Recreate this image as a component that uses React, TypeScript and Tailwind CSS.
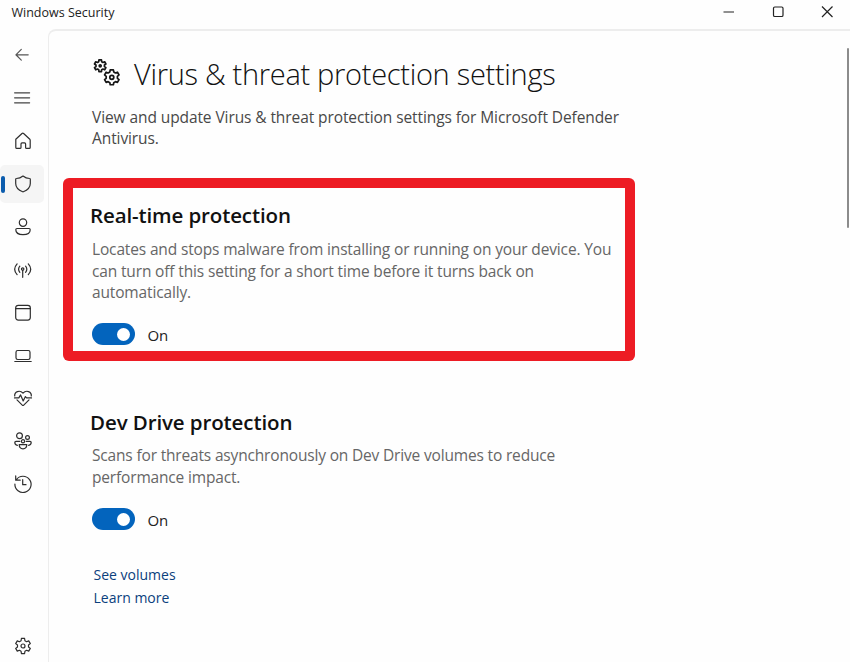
import type { ReactNode } from "react";

function gearPath(cx: number, cy: number, outer: number, inner: number) {
  const points: string[] = [];
  for (let i = 0; i < 6; i++) {
    const mid = -90 + i * 60;
    const corners: [number, number][] = [
      [mid - 20, inner],
      [mid - 12, outer],
      [mid + 12, outer],
      [mid + 20, inner],
    ];
    for (const [deg, r] of corners) {
      const a = (deg * Math.PI) / 180;
      points.push(`${(cx + r * Math.cos(a)).toFixed(2)} ${(cy + r * Math.sin(a)).toFixed(2)}`);
    }
  }
  return `M${points.join("L")}Z`;
}

function Icon({ children }: { children: ReactNode }) {
  return (
    <svg
      width="20"
      height="20"
      viewBox="0 0 20 20"
      fill="none"
      stroke="#2e2e2e"
      strokeWidth="1.2"
      strokeLinecap="round"
      strokeLinejoin="round"
    >
      {children}
    </svg>
  );
}

const navIcons: { name: string; art: ReactNode }[] = [
  { name: "Back", art: <path d="M15.2 9.8H3.2M8.3 4.4 2.9 9.8l5.4 5.3" stroke="#555" /> },
  { name: "Menu", art: <path d="M1.6 4.8h15M1.6 9.8h15M1.6 14.8h15" stroke="#444" /> },
  {
    name: "Home",
    art: <path d="M2.8 8.2 9 2.5a1.2 1.2 0 0 1 1.6 0l6.2 5.7c.3.3.4.6.4 1v7.2c0 .6-.4 1-1 1h-2.6c-.6 0-1-.4-1-1v-3.5c0-.6-.4-1-1-1H9c-.6 0-1 .4-1 1v3.5c0 .6-.4 1-1 1H3.8c-.6 0-1-.4-1-1Z" />,
  },
  {
    name: "Virus & threat protection",
    art: <path d="M10 2c2 1.6 4.3 2.4 6.6 2.5.4 0 .7.3.7.7v4.4c0 3.9-2.5 6.5-7 8.2a.8.8 0 0 1-.6 0c-4.5-1.7-7-4.3-7-8.2V5.2c0-.4.3-.7.7-.7C5.7 4.4 8 3.6 10 2Z" />,
  },
  {
    name: "Account protection",
    art: (
      <>
        <circle cx="10" cy="5.6" r="3.7" />
        <path d="M4 11.5h12c.7 0 1.2.5 1.2 1.2 0 3.1-3 5-7.2 5s-7.2-1.9-7.2-5c0-.7.5-1.2 1.2-1.2Z" />
      </>
    ),
  },
  {
    name: "Firewall & network protection",
    art: (
      <>
        <circle cx="9.7" cy="9.1" r="1.2" />
        <path d="M9.7 10.3v7M6.8 6.2c-1.4 1.8-1.4 4.4 0 6.2M12.6 6.2c1.4 1.8 1.4 4.4 0 6.2M4.1 3.9c-3 3.3-3 7.4 0 10.700M15.300 3.900c3 3.300 3 7.400 0 10.700" />
      </>
    ),
  },
  {
    name: "App & browser control",
    art: (
      <>
        <rect x="2.7" y="2.3" width="14.6" height="14.8" rx="2.5" />
        <path d="M2.7 5.7h14.6" />
      </>
    ),
  },
  {
    name: "Device security",
    art: (
      <>
        <rect x="3" y="4.5" width="14" height="9" rx="1.7" />
        <path d="M1.8 15.5h16.4" />
      </>
    ),
  },
  {
    name: "Device performance & health",
    art: (
      <>
        <path d="M1.7 7C1.3 2.8 6.7.4 10 4.2c3.3-3.8 8.7-1.4 8.3 2.8M4 10.8l5.5 5.5a.7.7 0 0 0 1 0l5.5-5.500" />
        <path d="M1.5 8.900h4.300l1.800-3 2.600 6 2.200-4.300 1.200 1.300h4.900" />
      </>
    ),
  },
  {
    name: "Family options",
    art: (
      <>
        <circle cx="6.5" cy="4.8" r="2.9" />
        <circle cx="14.5" cy="6.5" r="1.9" />
        <circle cx="10" cy="10.2" r="1.6" />
        <path d="M6.2 13.6h7.6c0 2.8-1.5 4.2-3.8 4.2s-3.8-1.4-3.8-4.2ZM6.8 10.4H3c-.8 0-1.2.4-1.2 1 0 1.6.9 2.5 2.6 3M13.2 10.4H17c.8 0 1.2.4 1.2 1 0 1.6-.9 2.5-2.6 3" />
      </>
    ),
  },
  {
    name: "Protection history",
    art: <path d="M3.3 5.8A8.1 8.1 0 1 1 1.9 10M2.7 1.9v4.3h4.5M9.7 5.7v5H13" />,
  },
];

function Toggle() {
  return (
    <div className="flex h-[22px] items-center">
      <div className="flex h-[21.5px] w-[43px] items-center justify-end rounded-full bg-[#0364bd] pr-[5px]">
        <div className="h-[13px] w-[13px] rounded-full bg-white" />
      </div>
      <span className="mt-[1.5px] ml-[12.5px] text-[15px] leading-[20px] tracking-[-0.2px] text-[#222]">On</span>
    </div>
  );
}

export default function App() {
  return (
    <div className="flex h-[662px] w-[850px] flex-col overflow-hidden bg-[#fefefe] font-['Open_Sans','Noto_Sans',sans-serif] whitespace-nowrap">
      <header className="flex h-[29px] shrink-0 justify-between">
        <span className="mt-[3px] ml-[11.5px] text-[12.5px] leading-[20px] text-[#222]">Windows Security</span>
        <svg width="130" height="24" viewBox="0 0 130 24" fill="none" stroke="#222" strokeWidth="1.2">
          <path d="M3.5 12H14M102 6.5 112.5 17M112.5 6.5 102 17" />
          <rect x="53.5" y="7" width="9.5" height="9.5" rx="1.3" />
        </svg>
      </header>
      <div className="flex min-h-0 flex-1">
        <nav className="flex w-[48px] shrink-0 flex-col pt-[5px]">
          {navIcons.map((item, i) => (
            <div key={item.name} aria-label={item.name} className="flex h-[42.9px] shrink-0 items-center">
              {i === 3 ? (
                <div className="flex h-[38px] w-[44px] items-center rounded-[5px] bg-[#f5f5f5]">
                  <div className="ml-[1px] h-[17px] w-[4px] rounded-full bg-[#0b5cad]" />
                  <div className="ml-[8px]">
                    <Icon>{item.art}</Icon>
                  </div>
                </div>
              ) : (
                <div className="ml-[13px]">
                  <Icon>{item.art}</Icon>
                </div>
              )}
            </div>
          ))}
          <div className="mt-auto mb-[6px] ml-[13px]">
            <Icon>
              <path d={gearPath(10, 10, 7.7, 5.6)} />
              <circle cx="10" cy="10" r="2" />
            </Icon>
          </div>
        </nav>
        <main className="flex min-w-0 flex-1 justify-between rounded-tl-[8px] border-t-2 border-l border-[#ededed] bg-[#fefefe]">
          <div className="flex flex-col">
            <div className="mt-[23px] ml-[43px] flex h-[40px]">
              <svg className="mt-[3px]" width="30" height="32" viewBox="0 0 30 32" fill="none" stroke="#161616" strokeWidth="1.7" strokeLinejoin="round">
                <path d={gearPath(8.2, 8.8, 6, 4.3)} />
                <circle cx="8.2" cy="8.8" r="1" />
                <path d={gearPath(19.8, 20.3, 7.6, 5.7)} />
                <circle cx="19.8" cy="20.3" r="2" />
              </svg>
              <h1 className="mt-px ml-[12px] text-[29px] leading-[38px] font-light tracking-[-0.3px] text-[#111]">Virus &amp; threat protection settings</h1>
            </div>
            <p className="mt-[12.5px] ml-[43px] text-[15.5px] leading-[21.5px] tracking-[-0.09px] text-[#484848]">
              View and update Virus &amp; threat protection settings for Microsoft Defender<br />Antivirus.
            </p>
            <section className="mt-[28.5px] ml-[14px] h-[183px] w-[572px] rounded-[6px] bg-[#ed1c24] p-[10px]">
              <div className="h-[163px] bg-[#fefefe] pt-[13px] pl-[17px]">
                <h2 className="text-[20.5px] leading-[28px] font-semibold tracking-[-0.12px] text-[#111]">Real-time protection</h2>
                <p className="mt-[10px] ml-[2px] text-[15.5px] leading-[21.5px] tracking-[-0.15px] text-[#666]">
                  Locates and stops malware from installing or running on your device. You<br />can turn off this setting for a short time before it turns back on<br />automatically.
                </p>
                <div className="mt-[19.5px] ml-[2px]"><Toggle /></div>
              </div>
            </section>
            <section className="mt-[47px] ml-[41px]">
              <h2 className="text-[20.5px] leading-[28px] font-semibold tracking-[-0.1px] text-[#111]">Dev Drive protection</h2>
              <p className="mt-[9px] ml-[2px] text-[15.5px] leading-[21.5px] tracking-[-0.17px] text-[#666]">
                Scans for threats asynchronously on Dev Drive volumes to reduce<br />performance impact.
              </p>
              <div className="mt-[20px] ml-[2px]"><Toggle /></div>
              <div className="mt-[32.5px] ml-[3.5px] flex flex-col text-[14px] leading-[23px] text-[#0b3f7d]">
                <a>See volumes</a>
                <a>Learn more</a>
              </div>
            </section>
          </div>
          <div className="mt-[17px] mr-px h-[180px] w-[2px] rounded-full bg-[#8c8c8c]" />
        </main>
      </div>
    </div>
  );
}
